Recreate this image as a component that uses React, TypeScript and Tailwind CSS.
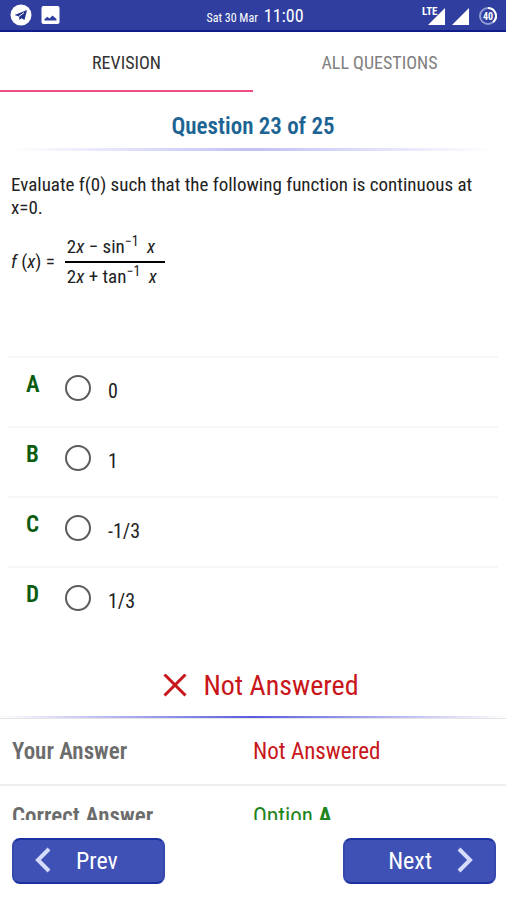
import { useState } from "react";

const OPTIONS = [
  { letter: "A", value: "0" },
  { letter: "B", value: "1" },
  { letter: "C", value: "-1/3" },
  { letter: "D", value: "1/3" },
];

function StatusBar() {
  return (
    <header className="grid grid-cols-3 items-center h-8 shrink-0 px-2 bg-[#303f9f] border-b-2 border-[#101c8a] text-white">
      <div className="flex items-center gap-2 pl-0.5">
        <svg className="w-[22px] h-[22px]" viewBox="0 0 22 22" aria-hidden="true">
          <circle cx="11" cy="11" r="10.5" fill="#fff" />
          <path d="M4.500 11 17 6 14.500 16l-3-1.800-2 1.800-.5-3.600z" fill="#25348f" />
          <path d="M9 12.400 14 8.600" stroke="#fff" strokeWidth="1" />
        </svg>
        <svg className="w-[22px] h-[22px]" viewBox="0 0 22 22" aria-hidden="true">
          <rect x="1.500" y="2" width="18" height="18" rx="2" fill="#fff" />
          <path d="M4.500 16.500v-1.500L7.500 12.800 9.500 14.500 12.500 11.500 16.500 15v1.500z" fill="#303f9f" />
        </svg>
      </div>
      <div className="flex items-baseline justify-center gap-1.5 pl-1 pt-0.5 whitespace-nowrap">
        <span className="text-xs">Sat 30 Mar</span>
        <span className="text-lg leading-7">11:00</span>
      </div>
      <div className="flex items-center justify-end">
        <svg className="w-20 h-7" viewBox="0 0 80 28" aria-hidden="true">
          <path d="M27 7v17H10z" fill="#fff" />
          <rect x="3" y="5" width="15" height="10" fill="#303f9f" />
          <text x="4" y="14" fill="#fff" fontSize="11" fontWeight="700">LTE</text>
          <path d="M51 7v17H34z" fill="#fff" />
          <circle cx="70" cy="15" r="8" fill="none" stroke="#8f9ad6" strokeWidth="2" />
          <path d="M70 7a8 8 0 0 1 5 14.200" fill="none" stroke="#fff" strokeWidth="2" />
          <text x="70" y="19" fill="#fff" fontSize="10" fontWeight="700" textAnchor="middle">40</text>
        </svg>
      </div>
    </header>
  );
}

function Tabs() {
  const tab = "h-[60px] pt-1 border-b-2 text-lg";
  return (
    <nav className="grid grid-cols-2 shrink-0">
      <button className={`${tab} border-[#ee4d88] text-[#333333]`}>REVISION</button>
      <button className={`${tab} border-transparent text-[#808080]`}>ALL QUESTIONS</button>
    </nav>
  );
}

function Formula() {
  return (
    <div className="flex items-center gap-2 mt-3.5 text-[19px] leading-7">
      <span className="whitespace-nowrap">
        <i>f</i> (<i>x</i>) =
      </span>
      <div className="ml-0.5 whitespace-nowrap">
        <div className="pl-0.5 pr-2 border-b-2 border-black">
          2<i>x</i> − sin<sup className="text-sm leading-none">−1</sup> <i className="ml-1">x</i>
        </div>
        <div className="pl-0.5 pr-2">
          2<i>x</i> + tan<sup className="text-sm leading-none">−1</sup> <i className="ml-1">x</i>
        </div>
      </div>
    </div>
  );
}

export default function App() {
  const [picked, setPicked] = useState("");

  return (
    <div className="flex flex-col h-screen bg-white text-[#222222] font-['Roboto_Condensed','Liberation_Sans_Narrow',Roboto,sans-serif]">
      <StatusBar />
      <Tabs />

      <main className="flex-1 min-h-0 overflow-hidden">
        <h1 className="h-14 leading-[70px] text-center text-[23px] font-semibold text-[#1c6494]">
          Question 23 of 25
        </h1>
        <div className="h-[3px] mx-3 bg-linear-to-r from-transparent via-[#c0c0f6] to-transparent" />

        <section className="h-[205px] px-[11px] pt-[22px]">
          <p className="text-[19px] leading-[23px]">
            Evaluate f(0) such that the following function is continuous at x=0.
          </p>
          <Formula />
        </section>

        <fieldset className="mx-2">
          {OPTIONS.map(({ letter, value }) => (
            <label key={letter} className="flex h-[70px] border-t-2 border-[#f7f7f7] pt-px pl-[18px]">
              <span className="w-[39px] pt-2.5 text-[23px] leading-8 font-semibold text-[#0c5c10]">{letter}</span>
              <input
                type="radio"
                name="answer"
                value={letter}
                checked={picked === letter}
                onChange={() => setPicked(letter)}
                className="appearance-none w-[26px] h-[26px] mt-4 rounded-full border-2 border-[#5c5c5c] checked:border-[6px]"
              />
              <span className="pl-[17px] pt-[18px] text-xl">{value}</span>
            </label>
          ))}
        </fieldset>

        <div className="flex items-center justify-center gap-4 h-20 pt-5 pl-4 text-[28px] text-[#c8161a]">
          <svg className="w-6 h-6" viewBox="0 0 24 24" fill="none" stroke="currentColor" strokeWidth="3" aria-hidden="true">
            <path d="M1.500 0.500 22.500 21.500M22.500 0.500 1.500 21.500" />
          </svg>
          Not Answered
        </div>
        <div className="h-[3px] border-b border-[#e4e4e4] bg-linear-to-r from-transparent via-[#5a5ae0] to-transparent bg-origin-border" />

        <table className="w-full table-fixed text-[23px] text-left">
          <tbody>
            <tr className="h-[66px] border-b-2 border-[#eeeeee]">
              <th className="pl-3 pt-0.5 font-semibold text-[#6c6c6c]">Your Answer</th>
              <td className="pt-0.5 text-[#c8161a]">Not Answered</td>
            </tr>
            <tr className="h-[62px]">
              <th className="pl-3 pt-0.5 font-semibold text-[#6c6c6c]">Correct Answer</th>
              <td className="pt-0.5 text-[#1f8420]">
                Option <b>A</b>
              </td>
            </tr>
          </tbody>
        </table>
      </main>

      <footer className="flex justify-between shrink-0 pl-3 pr-2.5 pt-[18px] pb-4 text-2xl text-white">
        <button className="flex items-center gap-5 w-[153px] h-[46px] pl-[18px] rounded-lg border-2 border-x-[#3448ae] border-y-[#1c31a0] bg-[#3f51b5]">
          <svg className="w-6 h-7" viewBox="0 0 24 28" fill="none" stroke="#d5dbfb" strokeWidth="4" aria-hidden="true">
            <path d="M17 2 6 13l11 11" />
          </svg>
          Prev
        </button>
        <button className="flex items-center justify-end gap-5 w-[153px] h-[46px] pr-[18px] rounded-lg border-2 border-x-[#3448ae] border-y-[#1c31a0] bg-[#3f51b5]">
          Next
          <svg className="w-6 h-7" viewBox="0 0 24 28" fill="none" stroke="#d5dbfb" strokeWidth="4" aria-hidden="true">
            <path d="M7 2l11 11L7 24" />
          </svg>
        </button>
      </footer>
    </div>
  );
}
